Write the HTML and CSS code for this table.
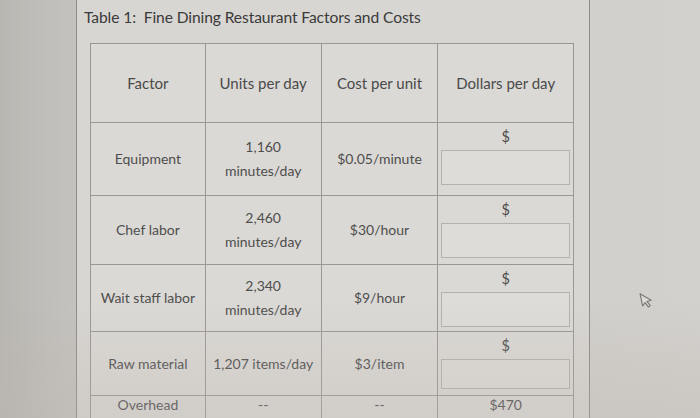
FILE: index.html
```html
<!DOCTYPE html>
<html>
<head>
<meta charset="utf-8">
<link rel="stylesheet" href="styles.css">
</head>
<body>
<div class="screen">
  <div class="panel">
    <div class="title">Table 1:&nbsp; Fine Dining Restaurant Factors and Costs</div>
    <table class="costs">
      <colgroup>
        <col class="c1"><col class="c2"><col class="c3"><col class="c4">
      </colgroup>
      <tr class="r-head">
        <td>Factor</td>
        <td>Units per day</td>
        <td>Cost per unit</td>
        <td>Dollars per day</td>
      </tr>
      <tr class="r-eq">
        <td>Equipment</td>
        <td>1,160<br>minutes/day</td>
        <td>$0.05/minute</td>
        <td class="money"><div class="sign">$</div><div class="box"></div></td>
      </tr>
      <tr class="r-chef">
        <td>Chef labor</td>
        <td>2,460<br>minutes/day</td>
        <td>$30/hour</td>
        <td class="money"><div class="sign">$</div><div class="box"></div></td>
      </tr>
      <tr class="r-wait">
        <td>Wait staff labor</td>
        <td>2,340<br>minutes/day</td>
        <td>$9/hour</td>
        <td class="money"><div class="sign">$</div><div class="box"></div></td>
      </tr>
      <tr class="r-raw">
        <td>Raw material</td>
        <td>1,207 items/day</td>
        <td>$3/item</td>
        <td class="money"><div class="sign">$</div><div class="box short"></div></td>
      </tr>
      <tr class="r-over">
        <td>Overhead</td>
        <td>--</td>
        <td>--</td>
        <td>$470</td>
      </tr>
    </table>
  </div>
  <svg class="cursor" width="14" height="18" viewBox="0 0 14 18">
    <path d="M1.5 1.5 L1.5 14 L4.6 11.2 L7 16.2 L9 15.2 L6.7 10.4 L11 10.2 Z" fill="#dcdad6" stroke="#7a7876" stroke-width="1.1" stroke-linejoin="round"/>
  </svg>
</div>
</body>
</html>
```

FILE: styles.css
```css
html, body {
  margin: 0;
  padding: 0;
}
body {
  width: 700px;
  height: 418px;
  overflow: hidden;
  font-family: Lato, "Open Sans", sans-serif;
}
.screen {
  position: relative;
  width: 700px;
  height: 418px;
  background: linear-gradient(90deg, #b9b7b2 0%, #c4c2be 10%, #cfcdc9 60%, #d3d1cd 100%);
  overflow: hidden;
}
.screen::after {
  content: "";
  position: absolute;
  left: 0;
  right: 0;
  bottom: 0;
  height: 120px;
  background: linear-gradient(180deg, rgba(190, 180, 176, 0) 0%, rgba(185, 176, 172, 0.3) 100%);
  pointer-events: none;
}
.panel {
  margin-left: 76px;
  width: 514px;
  height: 418px;
  box-sizing: border-box;
  border-left: 1px solid #8e8c88;
  border-right: 1px solid #8e8c88;
  background: #d8d6d2;
  padding: 7px 0 0 7px;
}
.title {
  font-size: 15.6px;
  color: #3a3a3a;
  line-height: 21px;
  letter-spacing: -0.1px;
}
.costs {
  margin: 15px 0 0 6px;
  border-collapse: collapse;
  width: 484px;
  color: #4e4e4e;
  font-size: 14px;
  background: #dbd9d5;
}
.c1 { width: 115px; }
.c2 { width: 116px; }
.c3 { width: 117px; }
.c4 { width: 136px; }
.costs td {
  border: 1px solid #9a9895;
  text-align: center;
  vertical-align: middle;
  padding: 0 2px;
  line-height: 24px;
}
.r-head td { height: 78px; font-size: 15px; color: #4a4a4a; }
.r-eq td { height: 68px; }
.r-chef td { height: 64px; }
.r-wait td { height: 62px; }
.r-raw td { height: 59px; }
.r-over td { height: 30px; vertical-align: top; line-height: 18px; padding-top: 0; }
.costs td.money {
  vertical-align: top;
  padding: 4px 3px 0;
}
.sign {
  line-height: 20px;
  font-size: 14.5px;
}
.box {
  height: 33px;
  margin-top: 3px;
  border: 1px solid #b4b2ae;
  background: #dedcd8;
}
.box.short {
  height: 28px;
}
.cursor {
  position: absolute;
  left: 640px;
  top: 291px;
  transform: rotate(-12deg);
}
```
